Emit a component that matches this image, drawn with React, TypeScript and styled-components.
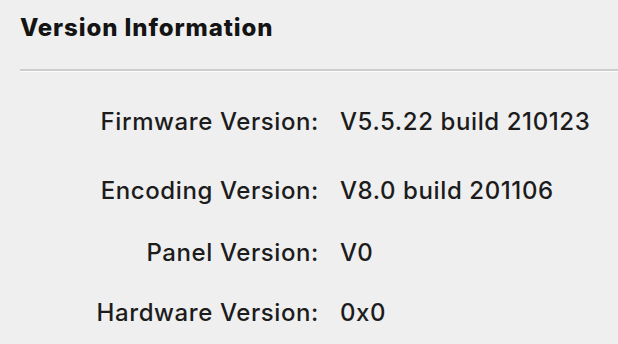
import React from 'react';
import styled, { createGlobalStyle } from 'styled-components';

const GlobalStyle = createGlobalStyle`
  html, body {
    margin: 0;
    padding: 0;
    background: #efefef;
  }
  body {
    font-family: Inter, "Liberation Sans", sans-serif;
    color: #1c1c1c;
  }
`;

const Panel = styled.div`
  width: 618px;
  height: 344px;
  background: #efefef;
  overflow: hidden;
`;

const Header = styled.div`
  padding: 13px 0 0 20px;
  height: 69px;
  box-sizing: border-box;
  font-size: 24px;
  font-weight: 800;
  letter-spacing: 0.9px;
  line-height: 30px;
  color: #141414;
`;

const Divider = styled.hr`
  margin: 0 0 0 20px;
  border: none;
  height: 2px;
  background: #cdcdcd;
  border-bottom: 1px solid #fbfbfb;
`;

const InfoList = styled.div`
  display: flex;
  flex-direction: column;
  margin: 35px 0 0 20px;
  font-size: 24px;
  font-weight: 500;
  line-height: 30px;
  letter-spacing: 0.6px;
`;

const Row = styled.div<{ $top: number }>`
  display: grid;
  grid-template-columns: 299px 1fr;
  column-gap: 21px;
  margin-top: ${(p) => p.$top}px;
`;

const Label = styled.span`
  text-align: right;
`;

const Value = styled.span``;

const rows = [
  { label: 'Firmware Version:', value: 'V5.5.22 build 210123', top: 0 },
  { label: 'Encoding Version:', value: 'V8.0 build 201106', top: 39 },
  { label: 'Panel Version:', value: 'V0', top: 32 },
  { label: 'Hardware Version:', value: '0x0', top: 30 },
];

export default function App() {
  return (
    <Panel>
      <GlobalStyle />
      <Header>Version Information</Header>
      <Divider />
      <InfoList>
        {rows.map((r) => (
          <Row key={r.label} $top={r.top}>
            <Label>{r.label}</Label>
            <Value>{r.value}</Value>
          </Row>
        ))}
      </InfoList>
    </Panel>
  );
}
